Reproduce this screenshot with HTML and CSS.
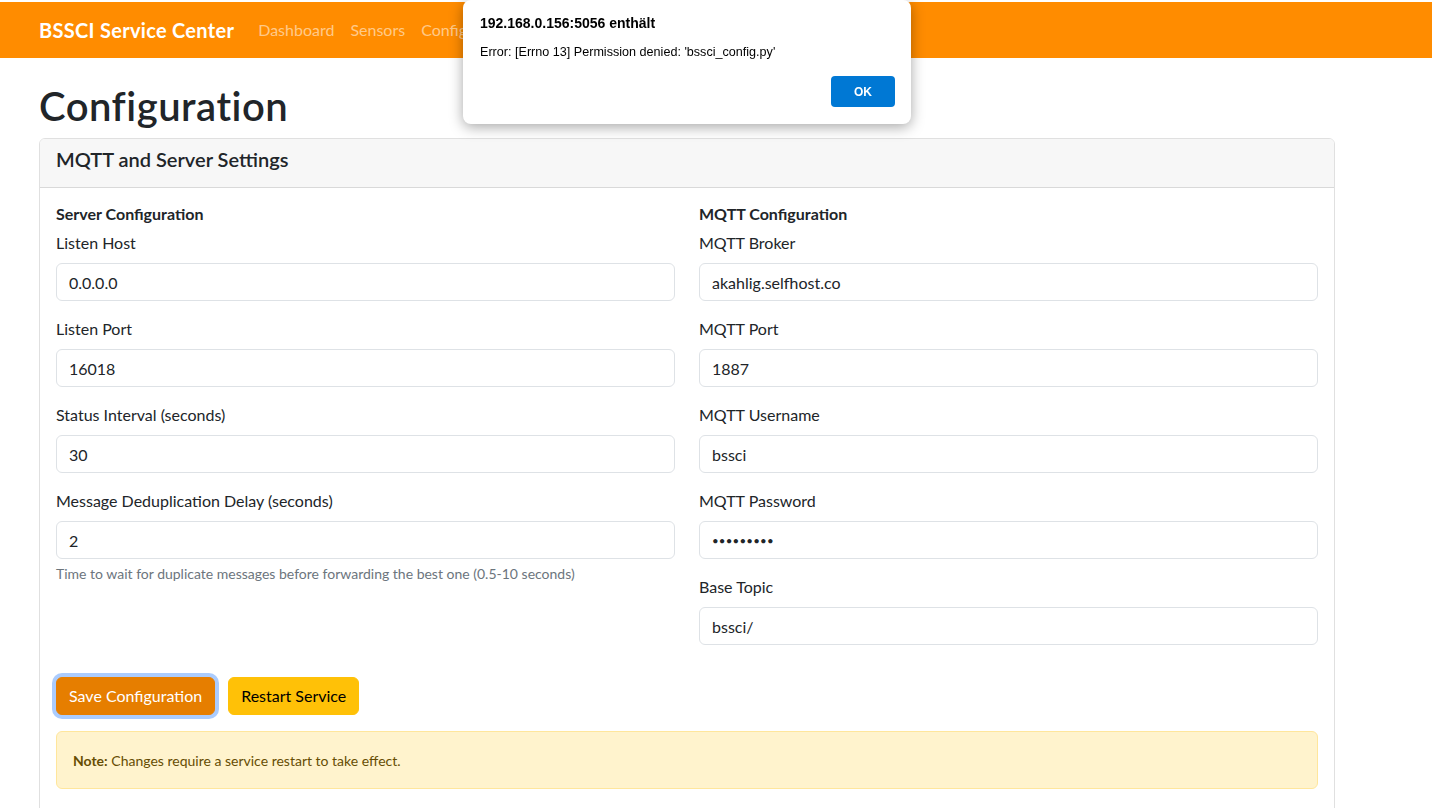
FILE: index.html
```html
<!DOCTYPE html>
<html lang="de">
<head>
<meta charset="utf-8">
<title>BSSCI Service Center - Configuration</title>
<link rel="stylesheet" href="styles.css">
</head>
<body>
<nav class="navbar">
  <div class="container nav-inner">
    <a class="brand" href="#">BSSCI Service Center</a>
    <ul class="nav-links">
      <li><a href="#">Dashboard</a></li>
      <li><a href="#">Sensors</a></li>
      <li><a href="#">Configuration</a></li>
      <li><a href="#">Logs</a></li>
    </ul>
  </div>
</nav>

<main class="container page">
  <h1 class="page-title">Configuration</h1>
  <div class="card">
    <div class="card-header"><h5 class="card-title">MQTT and Server Settings</h5></div>
    <div class="card-body">
      <form>
        <div class="row">
          <div class="col">
            <h6 class="section-title">Server Configuration</h6>
            <div class="field"><label>Listen Host</label><input class="input" type="text" value="0.0.0.0"></div>
            <div class="field"><label>Listen Port</label><input class="input" type="text" value="16018"></div>
            <div class="field"><label>Status Interval (seconds)</label><input class="input" type="text" value="30"></div>
            <div class="field"><label>Message Deduplication Delay (seconds)</label><input class="input" type="text" value="2">
              <div class="form-text">Time to wait for duplicate messages before forwarding the best one (0.5-10 seconds)</div>
            </div>
          </div>
          <div class="col">
            <h6 class="section-title">MQTT Configuration</h6>
            <div class="field"><label>MQTT Broker</label><input class="input" type="text" value="akahlig.selfhost.co"></div>
            <div class="field"><label>MQTT Port</label><input class="input" type="text" value="1887"></div>
            <div class="field"><label>MQTT Username</label><input class="input" type="text" value="bssci"></div>
            <div class="field"><label>MQTT Password</label><input class="input input-password" type="password" value="secretpw1"></div>
            <div class="field"><label>Base Topic</label><input class="input" type="text" value="bssci/"></div>
          </div>
        </div>
        <div class="actions">
          <button type="button" class="btn btn-save">Save Configuration</button>
          <button type="button" class="btn btn-restart">Restart Service</button>
        </div>
        <div class="alert"><small><strong>Note:</strong> Changes require a service restart to take effect.</small></div>
      </form>
    </div>
  </div>
</main>

<div class="dialog">
  <div class="dialog-title">192.168.0.156:5056 enthält</div>
  <div class="dialog-msg">Error: [Errno 13] Permission denied: 'bssci_config.py'</div>
  <button type="button" class="dialog-ok">OK</button>
</div>
</body>
</html>
```

FILE: styles.css
```css
* { box-sizing: border-box; }

body {
  margin: 0;
  font-family: Lato, "Liberation Sans", sans-serif;
  font-size: 16px;
  line-height: 1.5;
  color: #212529;
  background: #fff;
}

.container {
  width: 1320px;
  margin-left: 27px;
  padding: 0 12px;
}

/* Navbar */
.navbar {
  margin-top: 2px;
  background: #ff8c00;
  padding: 8px 0;
}
.nav-inner {
  display: flex;
  align-items: center;
}
.brand {
  font-size: 20px;
  font-weight: 700;
  line-height: 30px;
  letter-spacing: 0.3px;
  padding: 5px 0;
  margin-right: 16px;
  color: #fff;
  text-decoration: none;
}
.nav-links {
  display: flex;
  list-style: none;
  margin: 0;
  padding: 0;
}
.nav-links a {
  display: block;
  padding: 8px;
  color: rgba(255, 255, 255, 0.55);
  text-decoration: none;
  line-height: 24px;
}

/* Page */
.page { margin-top: 24px; }
.page-title {
  margin: 0 0 8px;
  font-size: 40px;
  font-weight: 600;
  line-height: 1.2;
  letter-spacing: 0.5px;
}

.card {
  border: 1px solid rgba(0, 0, 0, 0.12);
  border-radius: 6px;
  overflow: hidden;
}
.card-header {
  background: #f7f7f7;
  padding: 8px 16px;
  border-bottom: 1px solid rgba(0, 0, 0, 0.12);
}
.card-title {
  margin: 0 0 8px;
  font-size: 20px;
  font-weight: 600;
  line-height: 1.2;
}
.card-body { padding: 16px; }

.row {
  display: grid;
  grid-template-columns: 1fr 1fr;
  column-gap: 24px;
}
.section-title {
  margin: 0 0 8px;
  font-size: 16px;
  font-weight: 700;
  line-height: 1.2;
}
.field { margin-bottom: 16px; }
.field label {
  display: block;
  margin-bottom: 8px;
}
.input {
  display: block;
  width: 100%;
  height: 38px;
  padding: 6px 12px;
  font-family: inherit;
  font-size: 16px;
  line-height: 24px;
  color: #212529;
  background: #fff;
  border: 1px solid #dee2e6;
  border-radius: 6px;
}
.input-password {
  font-size: 11.5px;
  letter-spacing: 0.2px;
}
.form-text {
  margin-top: 4px;
  font-size: 14px;
  color: #6c757d;
}

.actions {
  display: flex;
  gap: 13px;
  margin-top: 16px;
}
.btn {
  padding: 6px 12px;
  font-family: inherit;
  font-size: 16px;
  line-height: 24px;
  border: 1px solid transparent;
  border-radius: 6px;
}
.btn-save {
  background: #e67e00;
  border-color: #e67e00;
  color: #fff;
  box-shadow: 0 0 0 4px rgba(13, 110, 253, 0.35);
}
.btn-restart {
  background: #ffc107;
  border-color: #ffc107;
  color: #000;
}

.alert {
  margin: 16px 0;
  padding: 16px;
  background: #fff3cd;
  border: 1px solid #ffe69c;
  border-radius: 6px;
  color: #664d03;
}
.alert small { font-size: 14px; }

/* Browser alert dialog overlay */
.dialog {
  position: fixed;
  top: 0;
  left: 463px;
  width: 448px;
  height: 124px;
  background: #fff;
  border-radius: 8px;
  box-shadow: 0 3px 14px rgba(0, 0, 0, 0.35);
  padding: 15px 16px 17px 17px;
  display: flex;
  flex-direction: column;
  font-family: "Liberation Sans", Arial, sans-serif;
  color: #000;
}
.dialog-title {
  font-size: 14px;
  font-weight: 700;
  line-height: 16px;
}
.dialog-msg {
  margin-top: 13px;
  font-size: 12.6px;
  line-height: 16px;
}
.dialog-ok {
  align-self: flex-end;
  margin-top: auto;
  width: 64px;
  height: 31px;
  border: none;
  border-radius: 4px;
  background: #0078d4;
  color: #fff;
  font-family: inherit;
  font-size: 12px;
  font-weight: 700;
}
```
